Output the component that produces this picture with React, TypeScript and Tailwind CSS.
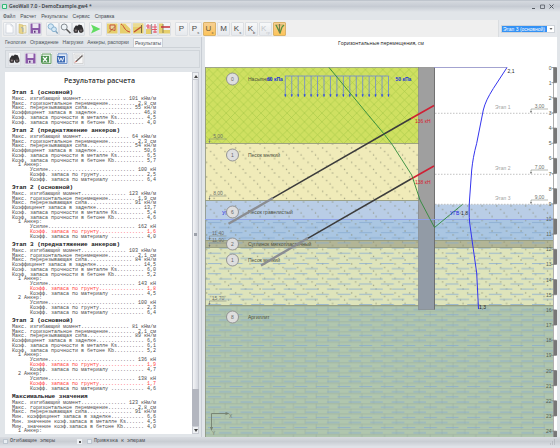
import React from "react";

type Line = { text: string; kind: "head" | "row" | "alert" };

const WIDTH = 48;

const head = (text: string): Line => ({ text, kind: "head" });
const blank: Line = { text: " ", kind: "row" };
const plain = (text: string): Line => ({ text, kind: "row" });
const row = (label: string, value: string, kind: Line["kind"] = "row"): Line => ({
  text: label + ".".repeat(Math.max(0, WIDTH - label.length - value.length - 1)) + " " + value,
  kind,
});

const stage = (title: string, m: string, u: string, q: string, k: string, ks: string, kb: string): Line[] => [
  head(title),
  row("Макс. изгибающий момент", m + " кНм/м"),
  row("Макс. горизонтальное перемещение", u + " см"),
  row("Макс. перерезывающая сила", q + " кН/м"),
  row("Коэффициент запаса в заделке", k),
  row("Коэф. запаса прочности в металле Ks", ks),
  row("Коэф. запаса прочности в бетоне Kb", kb),
];

const anchor = (n: number, force: string, soil: string, material: string, alert = false): Line[] => [
  plain(`  ${n} Анкер:`),
  row("      Усилие", force + " кН"),
  row("      Коэфф. запаса по грунту", soil, alert ? "alert" : "row"),
  row("      Коэфф. запаса по материалу ", material),
];

const report: Line[] = [
  ...stage("Этап 1 (основной)", "101", "2,8", "55", "46,8", "4,5", "4,0"),
  blank,
  ...stage("Этап 2 (преднатяжение анкеров)", "64", "2,3", "54", "50,6", "6,5", "5,7"),
  ...anchor(1, "100", "2,5", "6,4"),
  blank,
  ...stage("Этап 2 (основной)", "123", "1,9", "91", "13,7", "5,4", "4,6"),
  ...anchor(1, "162", "1,6", "4,0", true),
  blank,
  ...stage("Этап 3 (преднатяжение анкеров)", "103", "2,1", "84", "14,5", "6,0", "5,2"),
  ...anchor(1, "143", "1,8", "4,5", true),
  ...anchor(2, "100", "2,3", "6,4"),
  blank,
  ...stage("Этап 3 (основной)", "81", "2,1", "89", "6,6", "6,1", "5,2"),
  ...anchor(1, "136", "1,9", "4,7", true),
  ...anchor(2, "138", "1,7", "4,6", true),
  blank,
  head("Максимальные значения"),
  row("Макс. изгибающий момент", "123 кНм/м"),
  row("Макс. горизонтальное перемещение", "2,8 см"),
  row("Макс. перерезывающая сила", "91 кН/м"),
  row("Мин. коэффициент запаса в заделке", "6,6"),
  row("Мин. значение коэф.запаса в металле Ks", "4,5"),
  row("Мин. значение коэф.запаса в бетоне Kb", "4,0"),
  plain("  1 Анкер:"),
];

const lineStyle = {
  head: "text-[6px] leading-[2px] font-bold text-[#222]",
  row: "text-[5px] leading-[5px] text-[#4a4a4a]",
  alert: "text-[5px] leading-[5px] text-[#ff3b3b]",
};

function Icon({ children }: { children: React.ReactNode }) {
  return (
    <svg viewBox="0 0 11 11" className="size-[11px]" fill="none" aria-hidden="true">
      {children}
    </svg>
  );
}

const NewIcon = () => (
  <Icon>
    <path d="M2 1h5l2 2v7H2z" fill="#fdfdfe" stroke="#c3c9d4" strokeWidth=".6" />
    <path d="M7 1v2h2" stroke="#c3c9d4" strokeWidth=".6" />
  </Icon>
);
const OpenIcon = () => (
  <Icon>
    <path d="M2 1l4 1v9l-4-1z" fill="#e8d48a" stroke="#c9b469" strokeWidth=".5" />
    <path d="M6 2.5h3V10H6z" fill="#f5efd2" stroke="#c9b469" strokeWidth=".5" />
    <path d="M4 4.500l2 .5v4" stroke="#8ea6c8" strokeWidth=".8" />
  </Icon>
);
const SaveIcon = () => (
  <Icon>
    <path d="M.5.5h10v10h-10z" fill="#8a58a8" />
    <path d="M2.500.5h6V5h-6z" fill="#ece6f2" />
    <path d="M3 7h5v3.500H3z" fill="#d9cfe4" />
    <path d="M4 7.700h1.500v2H4z" fill="#5c3479" />
  </Icon>
);
const ZoomAllIcon = () => (
  <Icon>
    <circle cx="3.800" cy="3.500" r="2.700" fill="#d4e8f6" stroke="#88b2d0" />
    <circle cx="7" cy="6.300" r="2.400" fill="#d4e8f6" stroke="#88b2d0" />
    <path d="M8.700 8.200l2 2.300" stroke="#7fa0bb" strokeWidth="1.300" />
  </Icon>
);
const ZoomIcon = () => (
  <Icon>
    <circle cx="4.200" cy="4" r="3" fill="#eef3f6" stroke="#858c92" />
    <path d="M6.400 6.200l4 4" stroke="#555" strokeWidth="1.500" />
  </Icon>
);
const BinocularsIcon = () => (
  <Icon>
    <path d="M.8 5.500l2-3 2 .3 1-1.300 3 .8L10.300 6v3H6.500V7L5 7v2.500H.8z" fill="#302f31" />
    <circle cx="2.900" cy="7.600" r="2.300" fill="#3e3a3c" />
    <circle cx="8" cy="7.600" r="2.300" fill="#3e3a3c" />
    <circle cx="2.900" cy="7.600" r="1" fill="#8b7d7d" />
    <circle cx="8" cy="7.600" r="1" fill="#6e6666" />
  </Icon>
);
const RunIcon = () => (
  <Icon>
    <path d="M1 1.500L10.500 6 1 10.500 3 6z" fill="#62dc62" />
  </Icon>
);
const Soil = ({ children }: { children: React.ReactNode }) => (
  <Icon>
    <path d="M0 .5h10.500v10H0z" fill="#e6cf6d" />
    {children}
  </Icon>
);
const SoilWedge = () => (
  <Soil>
    <path d="M3 2h5v5.500L3 6z" fill="#ead9a0" stroke="#c9543c" strokeWidth="1" />
    <path d="M2 9.500l6-6" stroke="#a2582e" strokeWidth=".8" />
  </Soil>
);
const SoilCurve = () => (
  <Soil>
    <path d="M5 .5h6v6z" fill="#f3eee4" />
    <path d="M1 1c3 1 3 7 9 8" stroke="#cc4a34" />
  </Soil>
);
const SoilAnchor = () => (
  <Soil>
    <path d="M0 .5h10.500L6 4H0z" fill="#eadb94" />
    <path d="M1 9l7-5" stroke="#c24c31" strokeWidth="1.300" />
    <path d="M8.500 2v8" stroke="#7b6a42" />
  </Soil>
);
const SoilLoads = () => (
  <Icon>
    <path d="M0 6h5v5H0z" fill="#e6cf6d" />
    <path d="M5.500 1v10" stroke="#999" strokeWidth="1.200" />
    <path d="M0 3h5M1 5h4M6 4h5M6 6.500h5M7 9h4M2 1v4M9 1v9" stroke="#e4485c" strokeWidth=".9" />
  </Icon>
);
const SoilStrut = () => (
  <Icon>
    <path d="M0 .5h4v10H0zM4 7h7v3.500H4z" fill="#e6cf6d" />
    <path d="M4 1v9" stroke="#8c8052" />
    <path d="M2 4h9" stroke="#c5303a" strokeWidth="1.500" />
  </Icon>
);
const ExcelIcon = () => (
  <Icon>
    <path d="M1 1h9v9.500H1z" fill="#e1efe0" stroke="#6da269" />
    <path d="M0 3h8v6.500H0z" fill="#4c9150" />
    <path d="M2 4l4 4.500M6 4L2 8.500" stroke="#fff" strokeWidth="1.200" />
  </Icon>
);
const WordIcon = () => (
  <Icon>
    <path d="M1 .8h9v9.700H1z" fill="#e3ebf7" stroke="#6f93cb" />
    <path d="M0 3h8v6.500H0z" fill="#3b69b3" />
    <path d="M1.200 4.200l1.300 4L4 5l1.500 3.200 1.300-4" stroke="#fff" strokeWidth=".9" />
  </Icon>
);
const EditIcon = () => (
  <Icon>
    <path d="M1 1h9v9.500H1z" fill="#f7f7f7" stroke="#c2c2c2" strokeWidth=".6" />
    <path d="M2 3h5M2 5h3" stroke="#b9b9b9" strokeWidth=".7" />
    <path d="M3 8.500L9.500 2.500" stroke="#6b6260" strokeWidth="1.400" />
    <path d="M2 9.500l1.500-1.500" stroke="#cf4b3e" />
  </Icon>
);
const DiagramIcon = () => (
  <Icon>
    <path d="M1 2h8" stroke="#b8a258" strokeWidth=".8" />
    <path d="M2 2l4 8 2-6 2-2" stroke="#56913e" strokeWidth="1.300" />
    <path d="M5.500 1v9" stroke="#767a50" strokeWidth="1.200" />
  </Icon>
);

function ToolButton({
  label,
  children,
  active = false,
  disabled = false,
}: {
  label: string;
  children: React.ReactNode;
  active?: boolean;
  disabled?: boolean;
}) {
  return (
    <button
      type="button"
      aria-label={label}
      disabled={disabled}
      className={
        "flex h-[14px] w-[13px] shrink-0 items-center justify-center rounded-[1px] border text-[8px] leading-none " +
        (active
          ? "border-[#d9b26a] bg-linear-to-b from-[#f7cf92] to-[#fdc458] text-[#6b5a3e] "
          : "border-[#dcdfe3] bg-linear-to-b from-[#f7f8f9] to-[#e6e9ed] ") +
        (disabled ? "text-[#c4c7ca]" : active ? "" : "text-[#4a4a4a]")
      }
    >
      {children}
    </button>
  );
}

const Sub = ({ children }: { children: string }) => <span className="self-end text-[4px]">{children}</span>;

const menu = ["Файл", "Расчет", "Результаты", "Сервис", "Справка"];
const tabs = ["Геология", "Ограждение", "Нагрузки", "Анкеры, распорки"];

function Toolbar() {
  return (
    <div className="flex h-[17px] shrink-0 items-center bg-[#efefef] pl-px">
      <div className="flex">
        <ToolButton label="Новый"><NewIcon /></ToolButton>
        <ToolButton label="Открыть"><OpenIcon /></ToolButton>
        <ToolButton label="Сохранить"><SaveIcon /></ToolButton>
      </div>
      <div className="ml-1 flex">
        <ToolButton label="Показать все"><ZoomAllIcon /></ToolButton>
        <ToolButton label="Увеличить"><ZoomIcon /></ToolButton>
        <ToolButton label="Найти"><BinocularsIcon /></ToolButton>
      </div>
      <div className="ml-1 flex">
        <ToolButton label="Рассчитать"><RunIcon /></ToolButton>
      </div>
      <div className="ml-1 flex">
        <ToolButton label="Клин"><SoilWedge /></ToolButton>
        <ToolButton label="Откос"><SoilCurve /></ToolButton>
        <ToolButton label="Анкер"><SoilAnchor /></ToolButton>
        <ToolButton label="Нагрузка"><SoilLoads /></ToolButton>
        <ToolButton label="Распорка"><SoilStrut /></ToolButton>
      </div>
      <div className="ml-1 flex gap-px">
        <ToolButton label="P">P</ToolButton>
        <ToolButton label="Ps">P<Sub>s</Sub></ToolButton>
        <ToolButton label="Ux" active>U<Sub>x</Sub></ToolButton>
        <ToolButton label="M">M</ToolButton>
        <ToolButton label="Ks">K<Sub>s</Sub></ToolButton>
        <ToolButton label="Kb">K<Sub>b</Sub></ToolButton>
        <ToolButton label="Kгр" disabled>K<Sub>гр</Sub></ToolButton>
        <ToolButton label="Эпюра" active><DiagramIcon /></ToolButton>
      </div>
      <div className="ml-auto flex h-full items-center border-l border-[#dadde0] bg-[#e6e9ed] pr-[2px] pl-[2px]">
        <div className="mt-px flex h-2 w-[54px] items-center border border-[#cfd4da] bg-white">
          <select
            aria-label="Этап расчета"
            className="h-[6px] w-[45px] appearance-none overflow-hidden bg-[#3391f5] pl-px text-[5px] leading-[6px] text-white"
          >
            <option>Этап 3 (основной)</option>
          </select>
          <svg viewBox="0 0 6 4" className="mx-auto h-1 w-[6px]" aria-hidden="true">
            <path d="M1.500 1h3L3 3z" fill="#666" />
          </svg>
        </div>
      </div>
    </div>
  );
}

function Scrollbar() {
  return (
    <div className="flex w-[7px] shrink-0 flex-col bg-[#b3b6bf]">
      <button type="button" aria-label="Вверх" className="flex h-2 items-center justify-center border border-[#c9ccd3] bg-[#eef0f3]">
        <svg viewBox="0 0 4 3" className="h-[3px] w-1"><path d="M0 3l2-3 2 3z" fill="#444" /></svg>
      </button>
      <div className="flex grow-[309] items-center justify-center border-x border-[#c4c7ce] bg-linear-to-r from-[#f4f5f7] to-[#d5d8df]">
        <div className="h-[3px] w-[3px] bg-[#9da1aa]" />
      </div>
      <div className="grow-[37]" />
      <button type="button" aria-label="Вниз" className="flex h-2 items-center justify-center border border-[#c9ccd3] bg-[#eef0f3]">
        <svg viewBox="0 0 4 3" className="h-[3px] w-1"><path d="M0 0l2 3 2-3z" fill="#444" /></svg>
      </button>
    </div>
  );
}

function ReportPanel() {
  return (
    <section className="flex w-[200px] shrink-0 flex-col border-r border-[#c8cdd4] pr-px pl-[3px]">
      <nav className="flex h-[10px] shrink-0 items-end text-[5px] leading-[7px] text-[#4d5358]">
        {tabs.map((t) => (
          <button key={t} type="button" className="mr-1 h-[9px] pb-px whitespace-nowrap">
            {t}
          </button>
        ))}
        <button type="button" className="h-[9px] border border-b-0 border-[#ccd1d7] bg-[#f8f9fa] px-px">
          Результаты
        </button>
      </nav>
      <div className="flex h-[22px] shrink-0 items-center border-t border-[#cdd2d7]">
        <div className="flex h-[18px] grow items-center gap-[3px] border border-[#d0d5da] pl-[2px]">
          <ToolButton label="Найти в отчете"><BinocularsIcon /></ToolButton>
          <ToolButton label="Сохранить отчет"><SaveIcon /></ToolButton>
          <ToolButton label="Excel"><ExcelIcon /></ToolButton>
          <ToolButton label="Word"><WordIcon /></ToolButton>
          <ToolButton label="Редактировать"><EditIcon /></ToolButton>
        </div>
      </div>
      <div className="mt-[3px] mb-[3px] flex min-h-0 grow pr-px">
        <article className="flex min-w-0 grow flex-col bg-white">
          <h1 className="mt-1 h-4 shrink-0 pl-[2px] text-center font-['Open_Sans',sans-serif] text-[7px] leading-[10px] font-semibold text-[#333]">
            Результаты расчета
          </h1>
          <div className="grid min-h-0 grow auto-rows-[minmax(0,1fr)] pl-[7px] font-['Liberation_Mono',monospace] whitespace-pre">
            {report.map((l, i) => (
              <div key={i} className={lineStyle[l.kind]}>
                {l.text}
              </div>
            ))}
          </div>
        </article>
        <Scrollbar />
      </div>
    </section>
  );
}

const layers = [
  { n: "0", cy: 79, name: "Насыпной" },
  { n: "1", cy: 155, name: "Песок мелкий" },
  { n: "6", cy: 212, name: "Песок гравелистый" },
  { n: "2", cy: 244, name: "Суглинок мягкопластичный" },
  { n: "1", cy: 260, name: "Песок мелкий" },
  { n: "8", cy: 317, name: "Аргиллит" },
];
const depths = [
  { t: "5,00", y: 143 },
  { t: "8,00", y: 200 },
  { t: "11,40", y: 240 },
  { t: "11,90", y: 247 },
  { t: "15,70", y: 305 },
];
const stages = [
  { n: 1, y: 113, t: "3,00" },
  { n: 2, y: 174, t: "7,00" },
  { n: 3, y: 204, t: "9,00" },
];
const METRE = 15.15;
const GROUND = 67.5;

function Mark({ x, y, t }: { x: number; y: number; t: string }) {
  return (
    <g>
      <path d={`M${x} ${y - 0.5}v-3.500h17`} fill="none" stroke="#858a80" strokeWidth=".6" />
      <path d={`M${x - 1} ${y - 2}h2l-1 2z`} fill="#777" />
      <text x={x + 8.5} y={y - 5} textAnchor="middle" fill="#6c706a">{t}</text>
    </g>
  );
}

function Section() {
  return (
    <svg
      viewBox="205 67 352 370"
      preserveAspectRatio="xMinYMin meet"
      className="min-h-0 w-full grow overflow-visible text-[5px]"
      role="img"
      aria-label="Разрез ограждения"
    >
      <defs>
        <pattern id="fill" width="8.700" height="8.700" patternUnits="userSpaceOnUse">
          <path d="M0 0l8.700 8.700M8.700 0L0 8.700" stroke="#a5c848" strokeWidth=".6" />
        </pattern>
        <pattern id="sand" width="14.500" height="14.500" patternUnits="userSpaceOnUse">
          <path d="M3 3h1.200M10.500 10h1.200M7 6.500h1.200M13 13.500h1.200" stroke="#85866c" strokeWidth="1" />
        </pattern>
        <pattern id="water" x="208" y="221" width="21.600" height="10.260" patternUnits="userSpaceOnUse">
          <path d="M0 1.500h13M0 6.600h2M11 6.600h10.600" stroke="#86aad0" strokeWidth=".8" />
        </pattern>
        <pattern id="brick" x="206" y="306" width="22.800" height="10.260" patternUnits="userSpaceOnUse">
          <path d="M0 .3h22.800M0 5.430h22.800M8 0v5.130M19 5.130v5.130" stroke="#9bad9e" strokeWidth=".6" />
        </pattern>
      </defs>

      <path d="M205 67.500h213.500v76H205z" fill="#cfe061" />
      <path d="M205 67.500h213.500v76H205z" fill="url(#fill)" />
      <path d="M205 143.500h213.500v57H205z" fill="#f0ebb9" />
      <path d="M205 200.500h213.500v4H553v15H205z" fill="#b9cde6" />
      <path d="M205 219.500h348v21H205z" fill="#aac6e2" />
      <path d="M205 240.500h348v7H205z" fill="#b2b596" />
      <path d="M205 247.500h348v58H205z" fill="#dee4bb" />
      <path d="M205 143.500h213.500v61H553v101H205z" fill="url(#sand)" />
      <path d="M205 305.500h348v131.500H205z" fill="#b0c6ae" />
      <path d="M205 305.500h348v131.500H205z" fill="url(#brick)" />
      <path d="M205 221h348v216H205z" fill="url(#water)" />
      <path d="M205 143.500h214M205 200.500h214M205 240.500h348M205 247.500h348M205 305.500h348" stroke="#8b9272" strokeWidth=".8" />
      <path d="M205 67.500h214M205.500 67v370" stroke="#8d9382" strokeWidth=".8" />

      <path d="M418.500 67.500h16v242h-16z" fill="#9f9f9f" stroke="#777" strokeWidth=".6" />
      <path d="M418.500 219.500h16v90h-16z" fill="#929ba6" />
      <path d="M434.500 67.500v242" stroke="#666" strokeWidth=".8" />
      <path d="M205 219.500h348" stroke="#8b9eea" strokeWidth=".9" />

      {layers.map((l) => (
        <g key={l.cy}>
          {l.n === "6" && <text x="222" y="215" fill="#2222dd">УГВ</text>}
          <circle cx="232.500" cy={l.cy} r="6" fill="#dedede" stroke="#8b8b8b" strokeWidth=".9" />
          <text x="232.500" y={l.cy + 2} textAnchor="middle" fill="#666">{l.n}</text>
          <text x="248" y={l.cy + 2} fill="#4c5040">{l.name}</text>
        </g>
      ))}
      {depths.map((d) => <Mark key={d.t} x={209.5} y={d.y} t={d.t} />)}

      <g stroke="#6c87d6" strokeWidth=".8">
        <path d="M285 76h103.500" />
        {Array.from({ length: 17 }, (_, i) => {
          const x = 285.3 + i * 6.45;
          return (
            <g key={i}>
              <path d={`M${x} 76v20`} />
              <path d={`M${x - 0.8} 94.500h1.600l-.8 2.500z`} fill="#2b43e0" stroke="#2b43e0" strokeWidth=".3" />
            </g>
          );
        })}
      </g>
      <text x="267" y="81" fill="#2233dd" fontWeight="bold">60 кПа</text>
      <text x="395.500" y="81" fill="#2233dd" fontWeight="bold">50 кПа</text>

      <path d="M270 199.700L411 118.500M306 239.300L411 179" stroke="#3c3c3c" strokeWidth="1.500" />
      <path d="M228.500 223.800L273 198M261 265.500L308 238" stroke="#8b8d92" strokeWidth="2.400" />
      <path d="M411 118.500L434 105.500M411 179L434 166" stroke="#cf2034" strokeWidth="1.500" />
      <text x="415" y="123" fill="#d81f30">136 кН</text>
      <text x="415" y="184" fill="#d81f30">138 кН</text>

      <path d="M329 67.500L384 134l7.500 9.500L411.700 175 420 200l14.500 27.500L463 204" fill="none" stroke="#2f8a3a" strokeWidth=".9" />

      {stages.map((s) => (
        <g key={s.n}>
          <path d={`M435 ${s.y + 0.3}h118`} stroke="#a9a9a9" strokeWidth=".7" strokeDasharray="1.500 1.500" />
          <text x="495" y={s.y - 4} fill="#a3a3a3">Этап {s.n}</text>
          <Mark x={531} y={s.y} t={s.t} />
        </g>
      ))}

      <path d="M434 67.500h73" stroke="#8b8bc4" strokeWidth=".8" />
      <path
        d="M507 67.500L493.300 88.500C488 97 485 103 483.300 110L476.700 143.300C474 153 472.500 162 471.700 170L469.500 200C469 208 469 216 469.700 223L473 247l3.700 26 1.800 36"
        fill="none"
        stroke="#3434ee"
        strokeWidth="1"
      />
      <text x="507.500" y="73" fill="#222">2,1</text>
      <text x="479" y="309" fill="#222">1,3</text>
      <text x="450" y="215" fill="#2222dd">УГВ</text>
      <text x="461" y="215" fill="#222">1,8</text>

      <path d="M211.500 428.500v-15H227" fill="none" stroke="#74806f" strokeWidth=".9" />
      <path d="M225.500 412l4 1.500-4 1.500zM210 427h3l-1.500 4z" fill="#74806f" />
      <text x="229" y="418" fill="#74806f">X</text>
      <text x="212" y="435" fill="#74806f">Y</text>

      <path d="M553.500 67.500h3.500v369.500h-3.500z" fill="#fff" />
      {Array.from({ length: 25 }, (_, i) => {
        const y = GROUND + i * METRE;
        return (
          <g key={i}>
            {i % 2 === 0 && <rect x="553.500" y={y} width="3.500" height={Math.min(METRE, 437 - y)} fill="#777" />}
            <path d={`M551.500 ${y}h5`} stroke="#777" strokeWidth=".7" />
            <text x="551.500" y={y + 2} textAnchor="end" fill="#55604f">{i}</text>
          </g>
        );
      })}
      <path d="M553.500 67.500v369.500" stroke="#777" strokeWidth=".6" />
    </svg>
  );
}

function StatusCheck({ label }: { label: string }) {
  return (
    <label className="flex items-center gap-[2px] whitespace-nowrap">
      <input type="checkbox" className="size-[5px] appearance-none border border-[#bcc5cf] bg-[#e9eef3]" />
      {label}
    </label>
  );
}

export default function App() {
  return (
    <div className="flex h-screen flex-col overflow-hidden bg-[#e1e5e9] font-['Liberation_Sans',Arial,sans-serif]">
      <header className="flex h-3 shrink-0 items-center border-t border-[#bfc5cd] bg-linear-to-b from-[#d5d9df] via-[#c6cbd3] to-[#e1e5e9] px-[2px]">
        <svg viewBox="0 0 5 5" className="size-[5px]" aria-hidden="true">
          <path d="M.5.5h4v4h-4z" fill="#d8f4e4" stroke="#34b878" />
        </svg>
        <span className="ml-[2px] font-['Open_Sans',sans-serif] text-[5px] leading-none font-semibold text-[#33373c]">
          GeoWall 7.0 - DemoExample.gw4 *
        </span>
        <div className="ml-auto flex gap-1 pr-1 text-[#555b63]">
          <button type="button" aria-label="Свернуть">
            <svg viewBox="0 0 5 5" className="size-[5px]"><path d="M1 4.500h3" stroke="currentColor" /></svg>
          </button>
          <button type="button" aria-label="Развернуть">
            <svg viewBox="0 0 5 5" className="size-[5px]"><path d="M.5 1h4v3.500h-4z" fill="none" stroke="currentColor" strokeWidth=".8" /></svg>
          </button>
          <button type="button" aria-label="Закрыть">
            <svg viewBox="0 0 5 5" className="size-[5px]"><path d="M.5.5l4 4M4.500.5l-4 4" stroke="currentColor" /></svg>
          </button>
        </div>
      </header>
      <nav className="flex h-2 shrink-0 items-center gap-[5px] pl-[3px] text-[5px] leading-none text-[#454a50]">
        {menu.map((m) => (
          <button key={m} type="button">{m}</button>
        ))}
      </nav>
      <div className="flex min-h-0 grow flex-col pr-[3px] pl-[2px]">
        <Toolbar />
        <main className="flex min-h-0 grow">
          <ReportPanel />
          <section className="ml-[3px] flex min-w-0 grow flex-col bg-white">
            <h2 className="h-[30px] shrink-0 pt-[3px] text-center font-['Open_Sans',sans-serif] text-[5px] leading-[7px] text-[#111]">
              Горизонтальные перемещения, см
            </h2>
            <Section />
          </section>
        </main>
      </div>
      <footer className="flex h-[11px] shrink-0 items-center border-b-2 border-[#dfe2e8] bg-linear-to-b from-[#d9dce1] via-[#c9cdd3] to-[#dcdfe5] pl-[3px] font-['Liberation_Mono',monospace] text-[5px] leading-none text-[#44484d]">
        <div className="w-[74px]"><StatusCheck label="Огибающие эпюры" /></div>
        <button type="button" aria-label="Настройка эпюр" className="mr-[5px] flex size-[5px] items-center justify-center bg-[#edf0f3]">
          <span className="size-[2px] bg-[#555]" />
        </button>
        <StatusCheck label="Привязка к эпюрам" />
        <svg viewBox="0 0 6 6" className="mr-1 ml-auto size-[6px]" aria-hidden="true">
          <path d="M4 1h1M4 3h1M2 3h1M4 5h1M2 5h1M0 5h1" stroke="#a3a7ad" />
        </svg>
      </footer>
    </div>
  );
}
